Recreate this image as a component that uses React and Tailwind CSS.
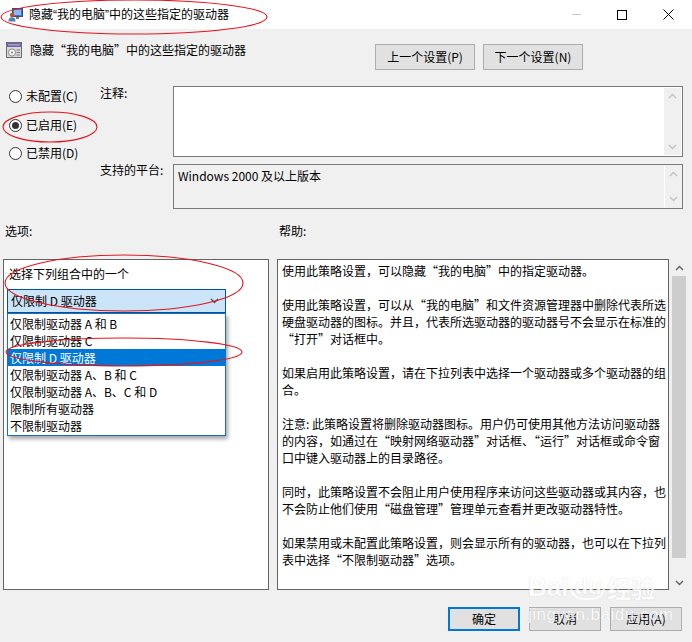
import React from 'react';

const HELP = [
  '使用此策略设置，可以隐藏“我的电脑”中的指定驱动器。',
  '',
  '使用此策略设置，可以从“我的电脑”和文件资源管理器中删除代表所选',
  '硬盘驱动器的图标。并且，代表所选驱动器的驱动器号不会显示在标准的',
  '“打开”对话框中。',
  '',
  '如果启用此策略设置，请在下拉列表中选择一个驱动器或多个驱动器的组',
  '合。',
  '',
  '注意: 此策略设置将删除驱动器图标。用户仍可使用其他方法访问驱动器',
  '的内容，如通过在“映射网络驱动器”对话框、“运行”对话框或命令窗',
  '口中键入驱动器上的目录路径。',
  '',
  '同时，此策略设置不会阻止用户使用程序来访问这些驱动器或其内容，也',
  '不会防止他们使用“磁盘管理”管理单元查看并更改驱动器特性。',
  '',
  '如果禁用或未配置此策略设置，则会显示所有的驱动器，也可以在下拉列',
  '表中选择“不限制驱动器”选项。',
];

const DRIVES = [
  '仅限制驱动器 A 和 B',
  '仅限制驱动器 C',
  '仅限制 D 驱动器',
  '仅限制驱动器 A、B 和 C',
  '仅限制驱动器 A、B、C 和 D',
  '限制所有驱动器',
  '不限制驱动器',
];

function Chevron({ up, color = '#c2c2c2' }) {
  return (
    <svg width="9" height="6" viewBox="0 0 9 6">
      <path d={up ? 'M1 5 L4.5 1.5 L8 5' : 'M1 1 L4.5 4.5 L8 1'} fill="none" stroke={color} strokeWidth="1.4" />
    </svg>
  );
}

function MiniScroll({ white }) {
  return (
    <div className={`w-[17px] h-full flex flex-col items-center justify-between py-[5px] bg-[#f0f0f0] ${white ? 'border-l border-white' : ''}`}>
      <Chevron up />
      <Chevron />
    </div>
  );
}

function Radio({ label, checked }) {
  return (
    <div className="flex items-center h-[20px] gap-[4px]">
      <div className="w-[13px] h-[13px] rounded-full border border-[#333] bg-white flex items-center justify-center">
        {checked && <div className="w-[7px] h-[7px] rounded-full bg-[#333]" />}
      </div>
      <span className="leading-[14px]">{label}</span>
    </div>
  );
}

function Btn({ children, primary, w = 'w-[72px]', h = 'h-[24px]' }) {
  return (
    <div
      className={`${w} ${h} flex items-center justify-center bg-[#e1e1e1] leading-[14px] ${
        primary ? 'border-2 border-[#0078d7]' : 'border border-[#adadad]'
      }`}
    >
      {children}
    </div>
  );
}

function TitleIcon() {
  return (
    <svg width="15" height="15" viewBox="0 0 15 15">
      <rect x="4.5" y="1.5" width="10" height="8" fill="#3f74d6" stroke="#4a4a4a" />
      <rect x="6" y="3" width="7" height="5" fill="#8fb8f2" />
      <rect x="8" y="10" width="3" height="2" fill="#777" />
      <circle cx="4" cy="8" r="2.2" fill="#b5553a" />
      <path d="M0.5 14.5 C0.5 11 2 10.3 4 10.3 C6 10.3 7.5 11 7.5 14.5 Z" fill="#5a7fb5" />
    </svg>
  );
}

function PolicyIcon() {
  return (
    <svg width="16" height="16" viewBox="0 0 16 16">
      <rect x="0.5" y="0.5" width="15" height="15" fill="#d9d9d9" stroke="#6d6d6d" />
      <rect x="1" y="1" width="14" height="4" fill="#6f64a8" />
      <rect x="2" y="2" width="12" height="1.5" fill="#a59ad6" />
      <circle cx="6" cy="10.5" r="3.6" fill="#f4f4f4" stroke="#8a8a8a" />
      <circle cx="6" cy="10.5" r="1" fill="#7d7d7d" />
      <rect x="10.5" y="7.5" width="3.5" height="1" fill="#7a7a7a" />
      <rect x="10.5" y="10" width="3.5" height="1" fill="#7a7a7a" />
      <rect x="10.5" y="12.5" width="3.5" height="1" fill="#7a7a7a" />
    </svg>
  );
}

export default function App() {
  return (
    <div className="relative w-[692px] h-[642px] overflow-hidden bg-[#f0f0f0] text-[12px] text-black font-['Noto_Sans_CJK_SC',sans-serif]">
      {/* title bar */}
      <div className="h-[29px] bg-white flex items-center">
        <div className="ml-[8px]">
          <TitleIcon />
        </div>
        <span className="ml-[6px] leading-[14px] font-['Liberation_Sans','Noto_Sans_CJK_SC',sans-serif]">隐藏“我的电脑”中的这些指定的驱动器</span>
        <div className="ml-auto flex h-full mr-[1px]">
          <div className="w-[46px] flex items-center justify-center">
            <div className="w-[9px] h-px bg-[#c8c8c8]" />
          </div>
          <div className="w-[46px] flex items-center justify-center">
            <div className="w-[10px] h-[10px] border border-black" />
          </div>
          <div className="w-[46px] flex items-center justify-center">
            <svg width="11" height="11" viewBox="0 0 11 11">
              <path d="M0.5 0.5 L10.5 10.5 M10.5 0.5 L0.5 10.5" stroke="#000" strokeWidth="1" />
            </svg>
          </div>
        </div>
      </div>

      {/* header row */}
      <div className="flex items-start mt-[13px] pl-[6px] pr-[109px]">
        <div className="flex items-center gap-[8px] h-[16px]">
          <PolicyIcon />
          <span className="leading-[14px]">隐藏“我的电脑”中的这些指定的驱动器</span>
        </div>
        <div className="ml-auto flex gap-[8px] mt-[2px]">
          <Btn w="w-[100px]" h="h-[26px]">上一个设置(P)</Btn>
          <Btn w="w-[100px]" h="h-[26px]">下一个设置(N)</Btn>
        </div>
      </div>

      {/* state + comment / platform */}
      <div className="flex mt-[16px]">
        <div className="w-[100px] pl-[9px] flex flex-col">
          <Radio label="未配置(C)" />
          <div className="mt-[9px]">
            <Radio label="已启用(E)" checked />
          </div>
          <div className="mt-[8px]">
            <Radio label="已禁用(D)" />
          </div>
        </div>
        <div className="grid grid-cols-[73px_510px] gap-y-[7px]">
          <div className="leading-[14px]">注释:</div>
          <div className="h-[71px] border border-[#7a7a7a] bg-white flex justify-end p-px">
            <MiniScroll />
          </div>
          <div className="leading-[14px] -mt-[1px]">支持的平台:</div>
          <div className="h-[45px] border border-[#7a7a7a] bg-[#f0f0f0] flex p-px">
            <div className="flex-1 px-[3px] pt-[3px] leading-[14px]">Windows 2000 及以上版本</div>
            <MiniScroll white />
          </div>
        </div>
      </div>

      {/* section labels */}
      <div className="flex mt-[15px] leading-[14px]">
        <div className="w-[279px] pl-[5px]">选项:</div>
        <div>帮助:</div>
      </div>

      {/* panels */}
      <div className="flex mt-[21px] h-[331px] pl-[3px]">
        <div className="relative w-[266px] h-full border border-[#646464] bg-white pl-[5px] pt-[7px]">
          <div className="leading-[14px]">选择下列组合中的一个</div>
          <div className="mt-[8px] w-[219px] h-[24px] -ml-[2px] border border-[#005499] bg-[#cce4f7] flex items-center pl-[3px] pr-[6px]">
            <span className="leading-[14px]">仅限制 D 驱动器</span>
            <div className="ml-auto">
              <Chevron color="#555" />
            </div>
          </div>
          {/* open dropdown list */}
          <div className="absolute left-[3px] top-[53px] w-[219px] border border-[#1a6fc0] bg-white py-px shadow-[2px_3px_4px_rgba(0,0,0,0.35)] z-10">
            {DRIVES.map((d, i) => (
              <div
                key={d}
                className={`h-[17px] leading-[17px] pl-[2px] whitespace-nowrap ${i === 2 ? 'bg-[#0078d7] text-white' : ''}`}
              >
                {d}
              </div>
            ))}
          </div>
        </div>

        <div className="ml-[8px] w-[392px] h-full border border-[#646464] bg-white pl-[4px] pt-[2px]">
          {HELP.map((line, i) => (
            <div key={i} className="h-[17px] leading-[17px] whitespace-nowrap">
              {line}
            </div>
          ))}
        </div>

        <div className="ml-[3px] w-[14px] h-full flex flex-col items-center">
          <div className="h-[17px] flex items-center">
            <Chevron up color="#606060" />
          </div>
          <div className="w-full h-[282px] bg-[#cdcdcd]" />
          <div className="flex-1 flex items-end pb-[4px]">
            <Chevron color="#606060" />
          </div>
        </div>
      </div>

      {/* bottom buttons */}
      <div className="flex justify-end gap-[9px] mt-[17px] pr-[10px]">
        <Btn primary>确定</Btn>
        <Btn>取消</Btn>
        <Btn>应用(A)</Btn>
      </div>

      {/* watermark */}
      <div className="absolute left-[528px] top-[574px] pointer-events-none text-white opacity-80 [text-shadow:0_0_1px_#bdbdbd]">
        <div className="flex items-end leading-none">
          <span className="text-[26px] font-bold font-['Liberation_Sans',sans-serif]">Bai</span>
          <span className="text-[22px] font-bold font-['Liberation_Sans',sans-serif] border-2 border-white rounded-full px-[2px] ml-[2px]">du</span>
          <span className="text-[24px] font-bold ml-[2px]">经验</span>
        </div>
        <div className="mt-[6px] text-[17px] leading-none font-['Liberation_Sans',sans-serif] tracking-[0.5px]">jingyan.baidu.com</div>
      </div>

      {/* red annotation ellipses */}
      <svg className="absolute inset-0 pointer-events-none z-20" width="692" height="642" viewBox="0 0 692 642">
        <g fill="none" stroke="#e3141c" strokeWidth="1.1">
          <ellipse cx="134" cy="17" rx="133" ry="17" />
          <ellipse cx="50" cy="127" rx="47" ry="15" />
          <ellipse cx="124" cy="283" rx="119" ry="28" />
          <ellipse cx="124" cy="352" rx="118" ry="14" />
        </g>
      </svg>
    </div>
  );
}
